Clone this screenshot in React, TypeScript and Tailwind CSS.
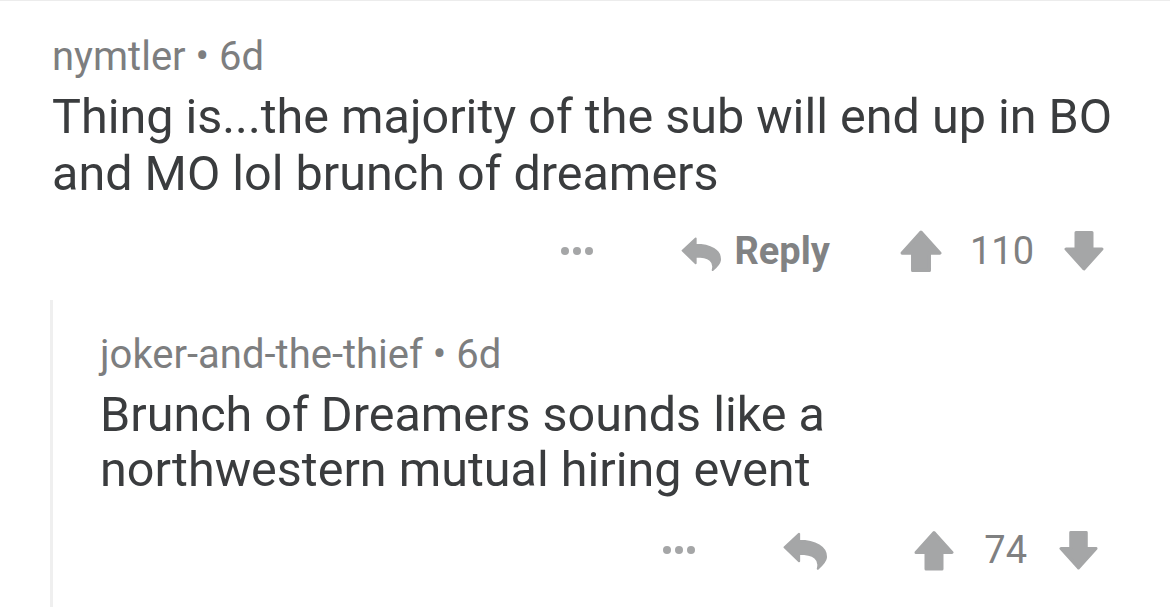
import React from 'react';

const ReplyIcon: React.FC<{ className?: string }> = ({ className }) => (
  <svg viewBox="0 0 42 35" className={className} fill="currentColor">
    <path
      d="M1.5 14 L15 1.5 L15 8 C30 8 41 14 40 24 C39.5 28 36 31 32.5 34 C35 25 29 20 15 20 L15 27 Z"
      stroke="currentColor"
      strokeWidth="2"
      strokeLinejoin="round"
    />
  </svg>
);

const ArrowUp: React.FC<{ className?: string }> = ({ className }) => (
  <svg viewBox="0 0 40 40" className={className} fill="currentColor">
    <polygon
      points="20,2 38,22 28,22 28,38.5 12,38.5 12,22 2,22"
      stroke="currentColor"
      strokeWidth="3"
      strokeLinejoin="round"
    />
  </svg>
);

const Dots: React.FC = () => (
  <div className="flex items-center gap-[4px]">
    <span className="w-[8px] h-[8px] rounded-full bg-[#a5a6a7]" />
    <span className="w-[8px] h-[8px] rounded-full bg-[#a5a6a7]" />
    <span className="w-[8px] h-[8px] rounded-full bg-[#a5a6a7]" />
  </div>
);

const font = { fontFamily: 'Roboto, "Noto Sans", sans-serif' };

const App: React.FC = () => {
  return (
    <div
      className="w-[1170px] h-[607px] bg-white border-t border-[#ececec] overflow-hidden"
      style={font}
    >
      {/* Parent comment */}
      <div className="pl-[52px] pr-[66px] pt-[34px]">
        <div className="text-[40px] leading-[44px] text-[#7d7e7f] whitespace-nowrap">
          nymtler • 6d
        </div>
        <p className="mt-[9px] text-[48.5px] leading-[57px] text-[#3a3c3e] whitespace-nowrap">
          Thing is...the majority of the sub will end up in BO
          <br />
          and MO lol brunch of dreamers
        </p>
        <div className="mt-[24px] h-[50px] flex items-center justify-end">
          <Dots />
          <div className="ml-[88px] flex items-center text-[#a5a6a7]">
            <ReplyIcon className="w-[41px] h-[34px] mt-[6px]" />
            <span className="ml-[12px] text-[38px] font-bold text-[#818283]">Reply</span>
          </div>
          <div className="ml-[70px] flex items-center text-[#a5a6a7]">
            <ArrowUp className="w-[42px] h-[42px]" />
            <span className="ml-[28px] text-[38px] text-[#7f8081]">110</span>
            <ArrowUp className="ml-[30px] w-[40px] h-[42px] rotate-180" />
          </div>
        </div>
      </div>

      {/* Child comment */}
      <div className="ml-[50px] mt-[24px] border-l-[3px] border-[#efefef] pl-[47px] pr-[72px] pt-[33px] h-[400px]">
        <div className="text-[40px] leading-[44px] text-[#7d7e7f] whitespace-nowrap">
          joker-and-the-thief • 6d
        </div>
        <p className="mt-[10px] text-[48.5px] leading-[55px] text-[#3a3c3e] whitespace-nowrap">
          Brunch of Dreamers sounds like a
          <br />
          northwestern mutual hiring event
        </p>
        <div className="mt-[28px] h-[50px] flex items-center justify-end">
          <Dots />
          <ReplyIcon className="ml-[88px] w-[45px] h-[38px] mt-[2px] text-[#a5a6a7]" />
          <div className="ml-[86px] flex items-center text-[#a5a6a7]">
            <ArrowUp className="w-[40px] h-[41px]" />
            <span className="ml-[30px] text-[38px] text-[#7f8081]">74</span>
            <ArrowUp className="ml-[32px] w-[39px] h-[41px] rotate-180" />
          </div>
        </div>
      </div>
    </div>
  );
};

export default App;
